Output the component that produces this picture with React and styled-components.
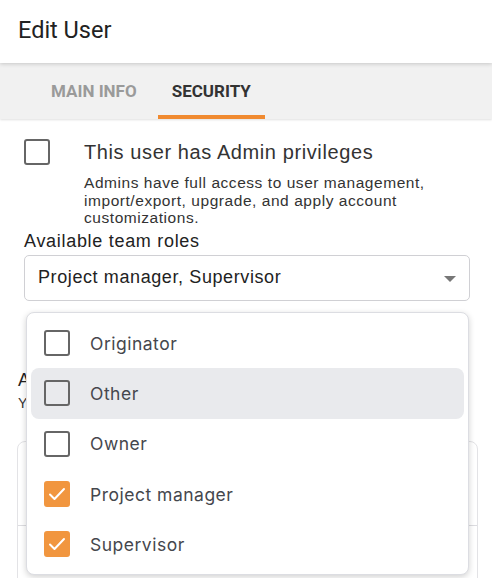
import React from 'react';
import styled, { createGlobalStyle } from 'styled-components';

const GlobalStyle = createGlobalStyle`
    body {
        margin: 0;
        background: #fff;
        font-family: "Liberation Sans", Arial, sans-serif;
        color: #333;
    }
`

const Page = styled.div`
    position: relative;
    width: 492px;
    height: 578px;
    overflow: hidden;
    background: #fff;
`

const Header = styled.header`
    position: relative;
    z-index: 2;
    height: 63px;
    display: flex;
    align-items: center;
    padding-left: 18px;
    box-sizing: border-box;
    background: #fff;
    box-shadow: 0 1px 4px rgba(0, 0, 0, 0.18);

    h1 {
        margin: 0;
        font-family: Roboto, "Liberation Sans", sans-serif;
        font-weight: 400;
        font-size: 23.5px;
        color: #222;
        padding-bottom: 4px;
    }
`

const TabBar = styled.nav`
    height: 56px;
    display: flex;
    padding-left: 37px;
    gap: 7px;
    background: #f1f1f1;
    box-shadow: 0 1px 2px rgba(0, 0, 0, 0.12);
`

const Tab = styled.div`
    display: flex;
    align-items: center;
    padding: 0 14px;
    font-family: Roboto, "Liberation Sans", sans-serif;
    font-weight: 700;
    font-size: 17px;
    text-transform: uppercase;
    color: ${p => (p.$active ? '#333' : '#9a9a9a')};
    border-bottom: 4px solid ${p => (p.$active ? '#f08a30' : 'transparent')};
    padding-top: 4px;
    box-sizing: border-box;
`

const Content = styled.section`
    padding: 20px 22px 0 24px;
`

const AdminRow = styled.div`
    display: flex;
    gap: 34px;
`

const Box = styled.span`
    flex: none;
    width: 26px;
    height: 26px;
    box-sizing: border-box;
    border-radius: 3px;
    border: 2px solid ${p => (p.$checked ? '#f1963f' : '#666')};
    background: ${p => (p.$checked ? '#f1963f' : 'transparent')};
    display: flex;
    align-items: center;
    justify-content: center;
`

const AdminText = styled.div`
    h2 {
        margin: 1px 0 0;
        font-weight: 400;
        font-size: 20px;
        letter-spacing: 0.6px;
        line-height: 24px;
        color: #333;
    }
    p {
        margin: 10px 0 0;
        font-size: 15.5px;
        letter-spacing: 0.55px;
        line-height: 17.5px;
        color: #333;
        width: 370px;
    }
`

const FieldLabel = styled.div`
    margin-top: 3px;
    font-size: 18px;
    letter-spacing: 0.7px;
    line-height: 22px;
    color: #222;
`

const Select = styled.div`
    margin-top: 3px;
    height: 46px;
    box-sizing: border-box;
    border: 1px solid #d0d0d4;
    border-radius: 5px;
    display: flex;
    align-items: center;
    justify-content: space-between;
    padding: 0 13px 0 13px;
    font-size: 18px;
    letter-spacing: 0.6px;
    color: #222;
`

const Caret = styled.span`
    width: 0;
    height: 0;
    border-left: 6px solid transparent;
    border-right: 6px solid transparent;
    border-top: 6px solid #777;
    margin-top: 2px;
`

const Hidden = styled.div`
    margin: 68px 0 0 -6px;

    strong {
        display: block;
        font-weight: 400;
        font-size: 18px;
        line-height: 22px;
        color: #222;
    }
    span {
        display: block;
        margin-top: 3px;
        font-size: 14px;
        line-height: 18px;
        color: #333;
    }
`

const Card = styled.div`
    margin: 29px -8px 0 -7px;
    height: 200px;
    border: 1px solid #e3e3e6;
    border-radius: 8px;

    div {
        height: 83px;
        border-bottom: 1px solid #dcdce0;
    }
`

const Menu = styled.ul`
    position: absolute;
    z-index: 5;
    top: 312px;
    left: 26px;
    width: 443px;
    height: 263px;
    box-sizing: border-box;
    margin: 0;
    padding: 5px 4px 7px;
    list-style: none;
    background: #fff;
    border: 1px solid #dcdde2;
    border-radius: 8px;
    box-shadow: 0 2px 6px rgba(0, 0, 0, 0.18);
`

const Item = styled.li`
    height: 50.3px;
    display: flex;
    align-items: center;
    gap: 20px;
    padding-left: 13px;
    border-radius: 8px;
    background: ${p => (p.$hover ? '#e9eaed' : 'transparent')};
    font-family: Inter, "Noto Sans", sans-serif;
    font-size: 17.5px;
    letter-spacing: 0.5px;
    color: #45474d;
`

const Check = () => (
    <svg width="18" height="14" viewBox="0 0 18 14" fill="none">
        <path d="M2 7.5 L6.5 12 L16 2" stroke="#fff" strokeWidth="2" strokeLinecap="round" strokeLinejoin="round" />
    </svg>
)

const roles = [
    { name: 'Originator' },
    { name: 'Other', hover: true },
    { name: 'Owner' },
    { name: 'Project manager', checked: true },
    { name: 'Supervisor', checked: true },
]

function App() {
    return (
        <Page>
            <GlobalStyle />
            <Header><h1>Edit User</h1></Header>
            <TabBar>
                <Tab>Main Info</Tab>
                <Tab $active>Security</Tab>
            </TabBar>
            <Content>
                <AdminRow>
                    <Box />
                    <AdminText>
                        <h2>This user has Admin privileges</h2>
                        <p>Admins have full access to user management, import/export, upgrade, and apply account customizations.</p>
                    </AdminText>
                </AdminRow>
                <FieldLabel>Available team roles</FieldLabel>
                <Select>
                    Project manager, Supervisor
                    <Caret />
                </Select>
                <Hidden>
                    <strong>Assigned teams</strong>
                    <span>You can assign this user to teams</span>
                </Hidden>
                <Card><div /></Card>
            </Content>
            <Menu>
                {roles.map(r => (
                    <Item key={r.name} $hover={r.hover}>
                        <Box $checked={r.checked}>{r.checked && <Check />}</Box>
                        {r.name}
                    </Item>
                ))}
            </Menu>
        </Page>
    )
}

export default App
